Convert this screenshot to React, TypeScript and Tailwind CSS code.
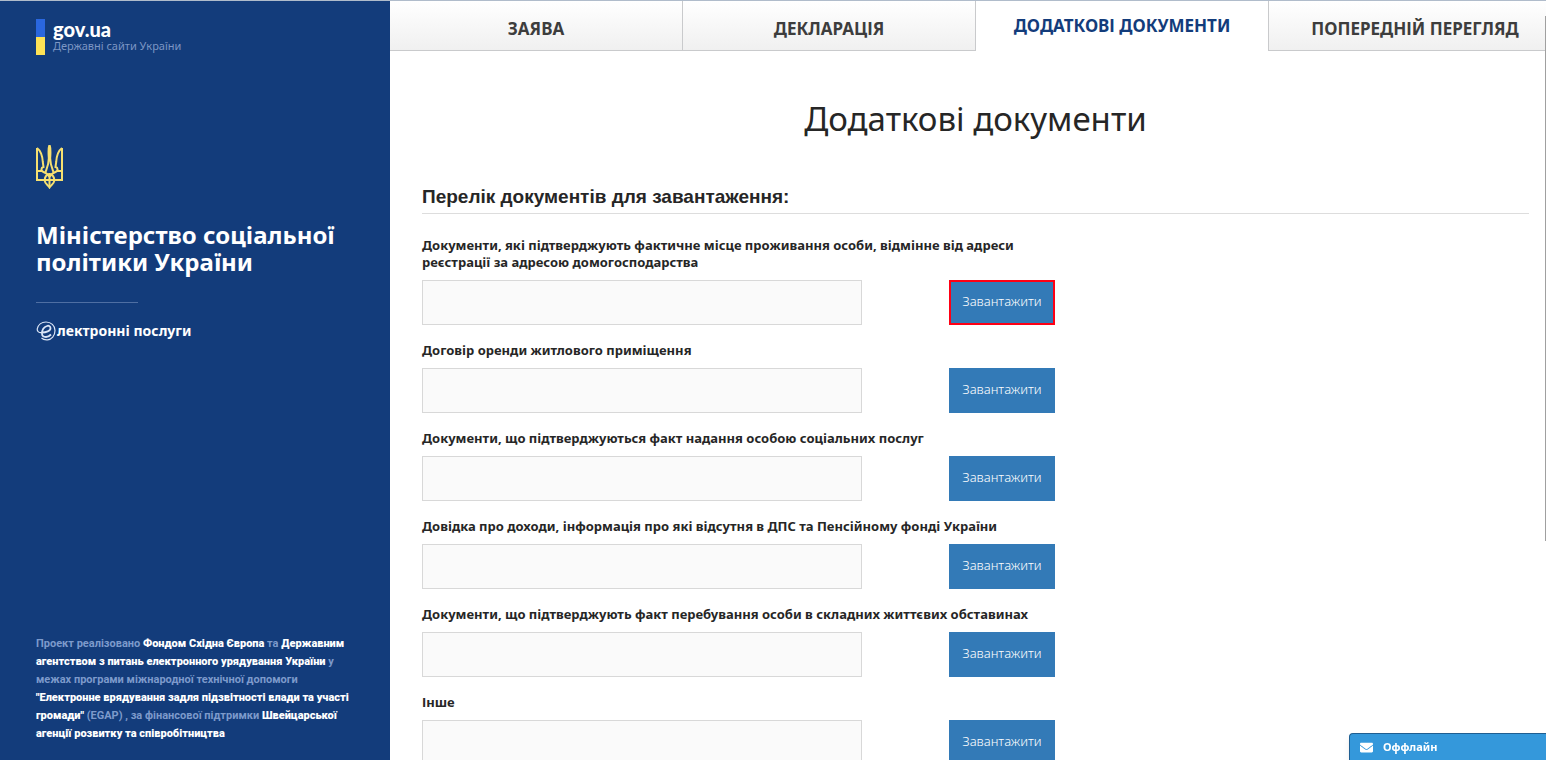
import { FaEnvelope } from "react-icons/fa";

const tabs = [
  { title: "ЗАЯВА", active: false },
  { title: "ДЕКЛАРАЦІЯ", active: false },
  { title: "ДОДАТКОВІ ДОКУМЕНТИ", active: true },
  { title: "ПОПЕРЕДНІЙ ПЕРЕГЛЯД", active: false },
];

const documents = [
  {
    id: "residence",
    label:
      "Документи, які підтверджують фактичне місце проживання особи, відмінне від адреси реєстрації за адресою домогосподарства",
    highlighted: true,
  },
  { id: "rent", label: "Договір оренди житлового приміщення", highlighted: false },
  {
    id: "services",
    label: "Документи, що підтверджуються факт надання особою соціальних послуг",
    highlighted: false,
  },
  {
    id: "income",
    label: "Довідка про доходи, інформація про які відсутня в ДПС та Пенсійному фонді України",
    highlighted: false,
  },
  {
    id: "hardship",
    label: "Документи, що підтверджують факт перебування особи в складних життєвих обставинах",
    highlighted: false,
  },
  { id: "other", label: "Інше", highlighted: false },
];

function Trident() {
  return (
    <svg viewBox="0 0 27 44" className="h-11 w-[27px]" fill="none" stroke="#f6e070" strokeWidth="2">
      <path d="M1 3V35H26V3" />
      <path d="M1 3C5 6 6.500 12 6.800 17L7.500 22C5 22.500 4.500 26 7.500 27C10 28 12.500 29.500 13.500 32" />
      <path d="M26 3C22 6 20.500 12 20.200 17L19.500 22C22 22.500 22.500 26 19.500 27C17 28 14.500 29.500 13.500 32" />
      <path d="M13.500 0C12 3 12.500 8 12.800 13C13 19 11 23 9.500 27M13.500 0C15 3 14.500 8 14.200 13C14 19 16 23 17.500 27" />
      <path d="M1 26H6M21 26H26M13.500 28V41" />
      <path d="M13.500 29C10 30 8.500 33 8.800 36C9 39 12 40 13.500 42.500C15 40 18 39 18.200 36C18.500 33 17 30 13.500 29Z" />
    </svg>
  );
}

function ServicesMark() {
  return (
    <svg viewBox="0 0 20 20" className="size-5" fill="none" stroke="#dbe6f7">
      <path
        strokeWidth="1.200"
        d="M6 11.500C3 12 1 10.500 1.200 8C2 4 5.500 1 10 1C15 1 19 4.500 19 9.500C19 15 15.500 18.500 11.500 18.800C9 19 7 18.500 5.500 17"
      />
      <path
        strokeWidth="1.800"
        d="M6 11.500C10 11.500 14.500 10 14.500 7.200C14.500 5 12.500 4.400 11 5C8 6 6 9 6 12.500C6 15 8 16 10 16C12 16 13.500 15 15 13.500"
      />
    </svg>
  );
}

function Sidebar() {
  return (
    <aside className="flex w-[390px] shrink-0 flex-col bg-[#133c7b] pt-[18px] pr-8 pb-[17px] pl-9 text-white">
      <a href="#gov" className="flex items-center gap-2">
        <span className="flex h-9 w-[9px] flex-col">
          <span className="flex-1 bg-[#2a67df]" />
          <span className="flex-1 bg-[#fde256]" />
        </span>
        <span className="flex flex-col">
          <span className="font-[Lato] text-xl leading-[18px] font-black">gov.ua</span>
          <span className="text-[11px] leading-4 text-[#7c96c4]">Державні сайти України</span>
        </span>
      </a>

      <div className="mt-[90px]">
        <Trident />
      </div>

      <h2 className="mt-8 text-2xl leading-[27px] font-bold">
        Міністерство соціальної
        <br />
        політики України
      </h2>

      <hr className="mt-[27px] w-[102px] border-[#4f6fa3]" />

      <a href="#services" className="mt-[18px] flex items-center gap-px text-sm leading-5 font-bold">
        <ServicesMark />
        лектронні послуги
      </a>

      <p className="mt-auto font-[Roboto,sans-serif] text-[11px] leading-[18px] font-bold text-[#7d9acb]">
        Проект реалізовано <b className="text-white">Фондом Східна Європа</b> та{" "}
        <b className="text-white">Державним агентством з питань електронного урядування України</b> у
        межах програми міжнародної технічної допомоги{" "}
        <b className="text-white">"Електронне врядування задля підзвітності влади та участі громади"</b>{" "}
        (EGAP) , за фінансової підтримки{" "}
        <b className="text-white">Швейцарської агенції розвитку та співробітництва</b>
      </p>
    </aside>
  );
}

function Tabs() {
  return (
    <nav className="-mr-4 grid grid-cols-4">
      {tabs.map((tab) => (
        <a
          key={tab.title}
          href="#tab"
          className={`flex h-[50px] justify-center border-r border-[#c9cacc] text-[17px] leading-6 font-bold ${
            tab.active
              ? "bg-white pt-[13px] text-[#133c7b]"
              : "border-b bg-linear-to-b from-white to-[#f0f0f0] pt-4 text-[#3d3d3d]"
          }`}
        >
          {tab.title}
        </a>
      ))}
    </nav>
  );
}

export default function App() {
  return (
    <div className="flex h-screen overflow-hidden border-t border-[#b0bccb] bg-white font-['Noto_Sans',sans-serif] text-[#262626]">
      <Sidebar />

      <main className="min-w-0 flex-1 overflow-x-hidden overflow-y-auto [scrollbar-width:none]">
        <Tabs />

        <div className="pr-[17px] pl-8">
          <h1 className="mt-11 text-center text-[33px] leading-[48px]">Додаткові документи</h1>

          <h3 className="mt-[41px] border-b border-[#dddddd] pb-[3px] font-['Liberation_Sans',sans-serif] text-[19px] leading-[26px] font-bold">
            Перелік документів для завантаження:
          </h3>

          <form className="mt-[23px] flex max-w-[634px] flex-col gap-[17px] pb-8">
            {documents.map((item) => (
              <div key={item.id}>
                <label htmlFor={item.id} className="block text-[13px] leading-[17px] font-bold">
                  {item.label}
                </label>
                <div className="mt-[9px] flex gap-[87px]">
                  <input
                    id={item.id}
                    type="text"
                    className="h-[45px] w-[440px] border border-[#d8d8d8] bg-[#fafafa] px-3"
                  />
                  <button
                    type="button"
                    className={`h-[45px] w-[106px] bg-[#337ab7] pb-0.5 text-[13px] font-light text-white ${
                      item.highlighted ? "border-2 border-[#ff0014]" : ""
                    }`}
                  >
                    Завантажити
                  </button>
                </div>
              </div>
            ))}
          </form>
        </div>
      </main>

      <div className="fixed top-4 right-0 h-[525px] w-px bg-[#a0a0a0]" />

      <button
        type="button"
        className="fixed right-0 bottom-0 flex h-[27px] w-[197px] items-center gap-[10px] rounded-tl-sm border-t border-l border-[#1f5f92] bg-[#3498db] px-[10px] text-[11px] font-bold text-white shadow-md"
      >
        <FaEnvelope size={13} />
        Оффлайн
      </button>
    </div>
  );
}
